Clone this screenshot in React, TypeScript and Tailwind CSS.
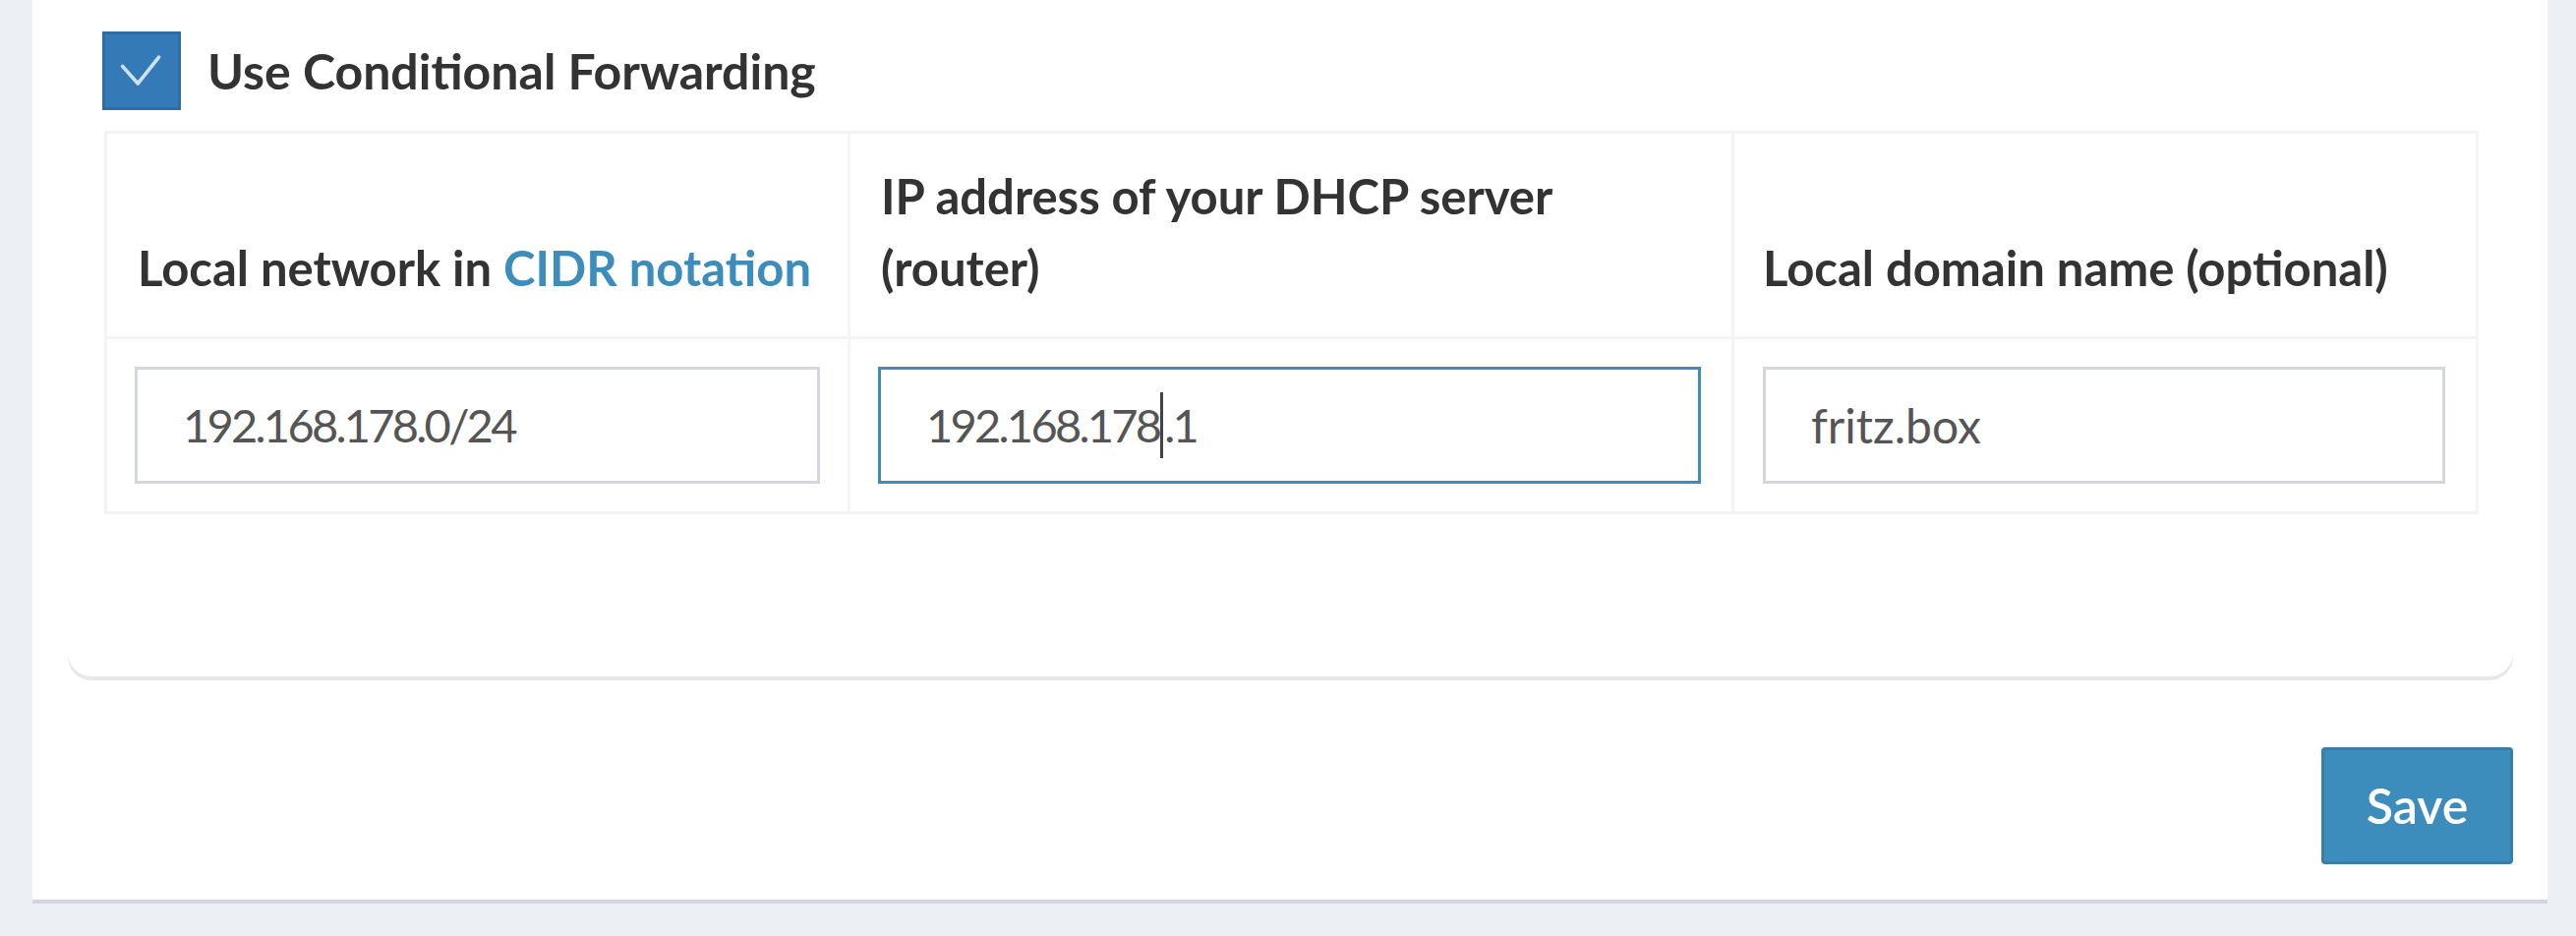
import { FC } from 'react'

const font = { fontFamily: 'Lato, "Liberation Sans", sans-serif' }

const Field: FC<{ value: string; focused?: boolean; caretAt?: number; numeric?: boolean }> = ({
  value,
  focused,
  caretAt,
  numeric,
}) => {
  const before = caretAt !== undefined ? value.slice(0, caretAt) : value
  const after = caretAt !== undefined ? value.slice(caretAt) : ''
  return (
    <div
      className={`flex h-[119px] items-center border-[3px] bg-white pl-[46px] text-[#555] ${
        focused ? 'border-[#3c8dbc]' : 'border-[#d2d6de]'
      } ${numeric ? 'text-[47px] tracking-[-2.75px]' : 'text-[48px]'}`}
    >
      <span>{before}</span>
      {caretAt !== undefined && <span className="mx-[1px] inline-block h-[67px] w-[3px] bg-[#444]" />}
      {after && <span>{after}</span>}
    </div>
  )
}

export default function App() {
  return (
    <div className="h-[952px] w-[2620px] overflow-hidden bg-[#ecf0f5]" style={font}>
      <div className="ml-[33px] flex w-[2558px] flex-col border-b-4 border-[#d2d6de] bg-white pr-[35px] pb-[36px] pl-[36px]">
        <div className="rounded-b-[24px] bg-white pt-[32px] pb-[165px] shadow-[0_4px_0_#e8e8e8]">
          <label className="flex items-center gap-[27px] pl-[35px]">
            <span className="flex h-[80px] w-[80px] items-center justify-center border-[3px] border-[#2e6da4] bg-[#337ab7]">
              <svg width="80" height="80" viewBox="0 0 80 80" fill="none">
                <path d="M19 35 L36 54 L59 25" stroke="#cfe2f5" strokeWidth="4" strokeLinecap="round" strokeLinejoin="round" />
              </svg>
            </span>
            <span className="text-[50px] font-bold text-[#333]">Use Conditional Forwarding</span>
          </label>

          <table className="mx-[37px] mt-[21px] w-[2412px] table-fixed border-collapse border-[3px] border-[#f4f4f4] text-[49px] text-[#333]">
            <colgroup>
              <col className="w-[756px]" />
              <col className="w-[899px]" />
              <col className="w-[757px]" />
            </colgroup>
            <thead>
              <tr>
                <th className="border-[3px] border-[#f4f4f4] pt-[27px] pr-[20px] pb-[33px] pl-[31px] text-left align-bottom leading-[73px] font-bold">
                  Local network in <span className="text-[#3c8dbc]">CIDR notation</span>
                </th>
                <th className="border-[3px] border-[#f4f4f4] pt-[27px] pr-[30px] pb-[33px] pl-[31px] text-left align-bottom leading-[73px] font-bold">
                  IP address of your DHCP server (router)
                </th>
                <th className="border-[3px] border-[#f4f4f4] pt-[27px] pr-[20px] pb-[33px] pl-[29px] text-left align-bottom leading-[73px] font-bold">
                  Local domain name (optional)
                </th>
              </tr>
            </thead>
            <tbody>
              <tr>
                <td className="border-[3px] border-[#f4f4f4] py-[28px] pr-[28px] pl-[28px]">
                  <Field value="192.168.178.0/24" numeric />
                </td>
                <td className="border-[3px] border-[#f4f4f4] py-[28px] pr-[31px] pl-[28px]">
                  <Field value="192.168.178.1" numeric focused caretAt={11} />
                </td>
                <td className="border-[3px] border-[#f4f4f4] py-[28px] pr-[31px] pl-[29px]">
                  <Field value="fritz.box" />
                </td>
              </tr>
            </tbody>
          </table>
        </div>

        <div className="mt-[72px] flex justify-end">
          <button className="h-[119px] w-[195px] rounded-[4px] border-[3px] border-[#367fa9] bg-[#3c8dbc] text-[50px] font-semibold text-white">
            Save
          </button>
        </div>
      </div>
    </div>
  )
}
